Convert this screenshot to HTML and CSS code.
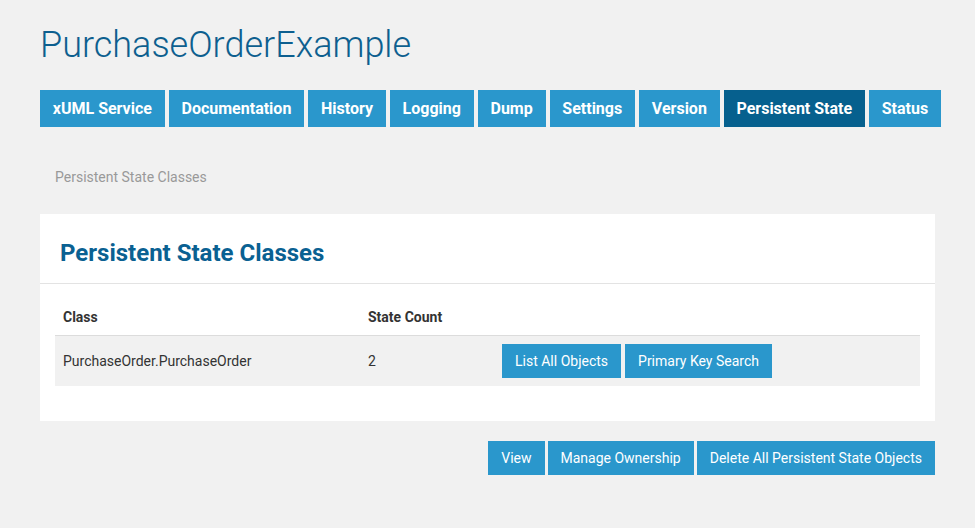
FILE: index.html
```html
<!DOCTYPE html>
<html>
<head>
<meta charset="utf-8">
<title>PurchaseOrderExample</title>
<link rel="stylesheet" href="styles.css">
</head>
<body>
<div class="page">
  <h1 class="title">PurchaseOrderExample</h1>
  <nav class="nav">
    <a class="nav-item">xUML Service</a>
    <a class="nav-item">Documentation</a>
    <a class="nav-item">History</a>
    <a class="nav-item">Logging</a>
    <a class="nav-item">Dump</a>
    <a class="nav-item">Settings</a>
    <a class="nav-item">Version</a>
    <a class="nav-item active">Persistent State</a>
    <a class="nav-item">Status</a>
  </nav>
  <div class="breadcrumb">Persistent State Classes</div>
  <section class="card">
    <div class="card-header">
      <h2 class="card-title">Persistent State Classes</h2>
    </div>
    <div class="card-body">
      <table class="table">
        <colgroup>
          <col class="col-class">
          <col class="col-count">
          <col>
        </colgroup>
        <thead>
          <tr><th>Class</th><th>State Count</th><th></th></tr>
        </thead>
        <tbody>
          <tr>
            <td>PurchaseOrder.PurchaseOrder</td>
            <td>2</td>
            <td>
              <div class="btn-row">
                <a class="btn">List All Objects</a>
                <a class="btn">Primary Key Search</a>
              </div>
            </td>
          </tr>
        </tbody>
      </table>
    </div>
  </section>
  <div class="actions">
    <a class="btn">View</a>
    <a class="btn">Manage Ownership</a>
    <a class="btn">Delete All Persistent State Objects</a>
  </div>
</div>
</body>
</html>
```
FILE: styles.css
```css
html, body {
  margin: 0;
  padding: 0;
}
body {
  background: #f1f1f1;
  font-family: Roboto, "Liberation Sans", Arial, sans-serif;
  color: #333;
  font-size: 14px;
}
.page {
  width: 895px;
  padding: 0 40px;
}
.title {
  margin: 24px 0 23px;
  font-size: 36px;
  line-height: 43px;
  font-weight: 300;
  color: #0d5f8f;
}
.nav {
  display: flex;
  gap: 4px;
  width: 960px;
}
.nav-item {
  display: block;
  background: #2a97cc;
  color: #fff;
  font-weight: 700;
  font-size: 16px;
  line-height: 37px;
  height: 37px;
  padding: 0 12.8px;
  white-space: nowrap;
}
.nav-item.active {
  background: #06608e;
}
.breadcrumb {
  padding: 0 15px;
  margin-top: 40px;
  line-height: 20px;
  color: #999;
  font-size: 14px;
}
.card {
  margin-top: 27px;
  background: #fff;
}
.card-header {
  padding: 25px 20px 15px;
  border-bottom: 1px solid #e3e3e3;
}
.card-title {
  margin: 0;
  font-size: 24px;
  line-height: 29px;
  font-weight: 700;
  color: #0a6192;
}
.card-body {
  padding: 15px 15px 35px;
}
.table {
  width: 100%;
  border-collapse: collapse;
}
.col-class { width: 305px; }
.col-count { width: 134px; }
.table th {
  text-align: left;
  font-weight: 700;
  padding: 8px;
  line-height: 20px;
  border-bottom: 1px solid #dcdcdc;
}
.table td {
  padding: 8px;
  line-height: 20px;
  background: #f1f1f1;
  vertical-align: middle;
}
.btn-row {
  display: flex;
  gap: 4px;
}
.btn {
  display: block;
  background: #2a97cc;
  color: #fff;
  font-size: 14px;
  line-height: 20px;
  padding: 7px 13px;
  white-space: nowrap;
}
.actions {
  display: flex;
  justify-content: flex-end;
  gap: 3px;
  margin-top: 20px;
}
```
